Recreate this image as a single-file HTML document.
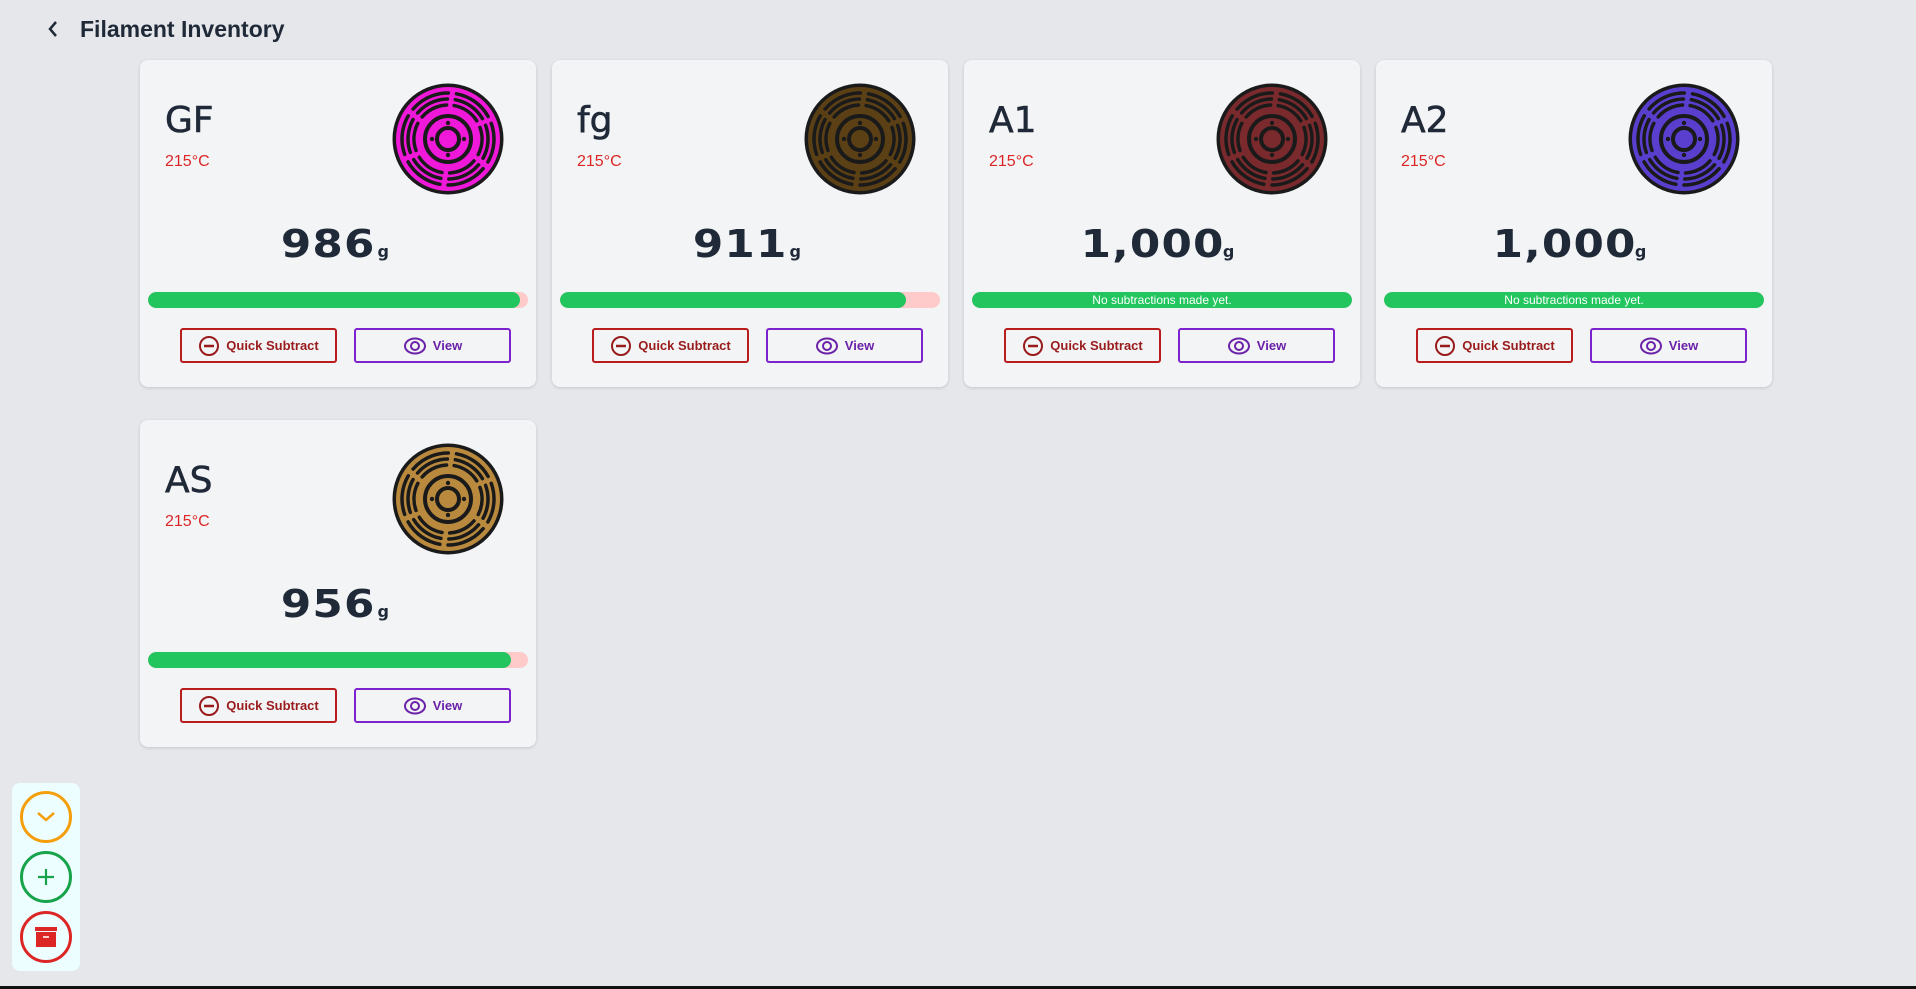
<!DOCTYPE html>
<html><head><meta charset="utf-8"><style>
*{box-sizing:border-box;margin:0;padding:0}
body{width:1916px;height:989px;background:#e5e7eb;font-family:"Liberation Sans",sans-serif;position:relative;overflow:hidden}
.hdr{position:absolute;left:46px;top:14px;height:30px;display:flex;align-items:center;color:#1f2937}
.hdr span{font-size:23px;font-weight:600;margin-left:20px}
.card{position:absolute;width:396px;height:327px;background:#f3f4f6;border-radius:8px;box-shadow:0 1px 3px rgba(0,0,0,.15)}
.t{position:absolute;left:25px;top:40px;font-size:36px;color:#1f2937;font-family:"DejaVu Sans",sans-serif;-webkit-text-stroke:0.6px #1f2937}
.tmp{position:absolute;left:25px;top:93px;font-size:16px;color:#dc2626}
.sp{position:absolute;left:252px;top:23px}
.w{position:absolute;left:0;right:0;top:162px;text-align:center;color:#1f2937;font-family:"DejaVu Sans",sans-serif;font-weight:bold}
.w b{font-size:38px;letter-spacing:1px;display:inline-block;transform:scaleX(1.15)}
.w i{font-style:normal;font-size:16px;margin-left:8px}
.bar{position:absolute;left:8px;top:232px;width:380px;height:16px;border-radius:8px;background:#fecaca;overflow:hidden}
.bar div{height:100%;background:#22c55e;border-radius:8px;color:#fff;font-size:12px;text-align:center;line-height:16px}
.btn{position:absolute;top:268px;width:157px;height:35px;border:2px solid;border-radius:3px;display:flex;align-items:center;justify-content:center;font-size:13px;font-weight:bold}
.qs{left:40px;border-color:#b91c1c;color:#991b1b}
.vw{left:214px;border-color:#7e22ce;color:#6b21a8}
.btn svg{margin-right:6px}
.fab{position:absolute;left:12px;top:783px;width:68px;height:188px;background:#ecfeff;border-radius:8px}
.c{position:absolute;left:8px;width:52px;height:52px;border-radius:50%;border:3px solid;display:flex;align-items:center;justify-content:center}
.line{position:absolute;left:0;bottom:0;width:1916px;height:3px;background:#111}
</style></head><body>
<div class="hdr"><svg width="14" height="20" viewBox="0 0 14 20"><path d="M10 3 L4 10 L10 17" fill="none" stroke="#1f2937" stroke-width="2.5"/></svg><span>Filament Inventory</span></div>

<svg width="0" height="0" style="position:absolute"><defs>
<g id="pat">
<circle cx="56" cy="56" r="55.5" fill="#1a1a1a"/>
<circle cx="56" cy="56" r="52" fill="currentColor"/>
<g fill="none" stroke="#1a1a1a" stroke-width="3.5" stroke-linecap="round">
<circle cx="56" cy="56" r="46" stroke-dasharray="40 8.2" transform="rotate(-20 56 56)"/>
<circle cx="56" cy="56" r="40" stroke-dasharray="34 7.9" transform="rotate(-20 56 56)"/>
<circle cx="56" cy="56" r="34" stroke-dasharray="28 7.6" transform="rotate(-20 56 56)"/>
<circle cx="56" cy="56" r="23" stroke-width="4"/>
<circle cx="56" cy="56" r="11" stroke-width="4"/>
</g>
<g fill="#1a1a1a"><circle cx="56" cy="40" r="2.2"/><circle cx="56" cy="72" r="2.2"/><circle cx="40" cy="56" r="2.2"/><circle cx="72" cy="56" r="2.2"/></g>
</g></defs></svg>

<div class="card" style="left:140px;top:60px">
<div class="t">GF</div><div class="tmp">215°C</div>
<svg class="sp" width="112" height="112" style="color:#f019d9"><use href="#pat"/></svg>
<div class="w"><b>986</b><i>g</i></div>
<div class="bar"><div style="width:98%"></div></div>
<div class="btn qs"><svg width="22" height="22" viewBox="0 0 22 22"><circle cx="11" cy="11" r="9" fill="none" stroke="#991b1b" stroke-width="2"/><path d="M6 11h10" stroke="#991b1b" stroke-width="2.5"/></svg>Quick Subtract</div>
<div class="btn vw"><svg width="24" height="18" viewBox="0 0 24 18"><ellipse cx="12" cy="9" rx="10" ry="7.5" fill="none" stroke="#6b21a8" stroke-width="2"/><circle cx="12" cy="9" r="4" fill="none" stroke="#6b21a8" stroke-width="2"/></svg>View</div>
</div>

<div class="card" style="left:552px;top:60px">
<div class="t">fg</div><div class="tmp">215°C</div>
<svg class="sp" width="112" height="112" style="color:#5c4015"><use href="#pat"/></svg>
<div class="w"><b>911</b><i>g</i></div>
<div class="bar"><div style="width:91%"></div></div>
<div class="btn qs"><svg width="22" height="22" viewBox="0 0 22 22"><circle cx="11" cy="11" r="9" fill="none" stroke="#991b1b" stroke-width="2"/><path d="M6 11h10" stroke="#991b1b" stroke-width="2.5"/></svg>Quick Subtract</div>
<div class="btn vw"><svg width="24" height="18" viewBox="0 0 24 18"><ellipse cx="12" cy="9" rx="10" ry="7.5" fill="none" stroke="#6b21a8" stroke-width="2"/><circle cx="12" cy="9" r="4" fill="none" stroke="#6b21a8" stroke-width="2"/></svg>View</div>
</div>

<div class="card" style="left:964px;top:60px">
<div class="t">A1</div><div class="tmp">215°C</div>
<svg class="sp" width="112" height="112" style="color:#7a2a2c"><use href="#pat"/></svg>
<div class="w"><b>1,000</b><i>g</i></div>
<div class="bar"><div style="width:100%">No subtractions made yet.</div></div>
<div class="btn qs"><svg width="22" height="22" viewBox="0 0 22 22"><circle cx="11" cy="11" r="9" fill="none" stroke="#991b1b" stroke-width="2"/><path d="M6 11h10" stroke="#991b1b" stroke-width="2.5"/></svg>Quick Subtract</div>
<div class="btn vw"><svg width="24" height="18" viewBox="0 0 24 18"><ellipse cx="12" cy="9" rx="10" ry="7.5" fill="none" stroke="#6b21a8" stroke-width="2"/><circle cx="12" cy="9" r="4" fill="none" stroke="#6b21a8" stroke-width="2"/></svg>View</div>
</div>

<div class="card" style="left:1376px;top:60px">
<div class="t">A2</div><div class="tmp">215°C</div>
<svg class="sp" width="112" height="112" style="color:#5a3fcf"><use href="#pat"/></svg>
<div class="w"><b>1,000</b><i>g</i></div>
<div class="bar"><div style="width:100%">No subtractions made yet.</div></div>
<div class="btn qs"><svg width="22" height="22" viewBox="0 0 22 22"><circle cx="11" cy="11" r="9" fill="none" stroke="#991b1b" stroke-width="2"/><path d="M6 11h10" stroke="#991b1b" stroke-width="2.5"/></svg>Quick Subtract</div>
<div class="btn vw"><svg width="24" height="18" viewBox="0 0 24 18"><ellipse cx="12" cy="9" rx="10" ry="7.5" fill="none" stroke="#6b21a8" stroke-width="2"/><circle cx="12" cy="9" r="4" fill="none" stroke="#6b21a8" stroke-width="2"/></svg>View</div>
</div>

<div class="card" style="left:140px;top:420px">
<div class="t">AS</div><div class="tmp">215°C</div>
<svg class="sp" width="112" height="112" style="color:#b98a3e"><use href="#pat"/></svg>
<div class="w"><b>956</b><i>g</i></div>
<div class="bar"><div style="width:95.6%"></div></div>
<div class="btn qs"><svg width="22" height="22" viewBox="0 0 22 22"><circle cx="11" cy="11" r="9" fill="none" stroke="#991b1b" stroke-width="2"/><path d="M6 11h10" stroke="#991b1b" stroke-width="2.5"/></svg>Quick Subtract</div>
<div class="btn vw"><svg width="24" height="18" viewBox="0 0 24 18"><ellipse cx="12" cy="9" rx="10" ry="7.5" fill="none" stroke="#6b21a8" stroke-width="2"/><circle cx="12" cy="9" r="4" fill="none" stroke="#6b21a8" stroke-width="2"/></svg>View</div>
</div>

<div class="fab">
<div class="c" style="top:8px;border-color:#f59e0b"><svg width="20" height="12" viewBox="0 0 20 12"><path d="M2 2 L10 9 L18 2" fill="none" stroke="#f59e0b" stroke-width="2.5"/></svg></div>
<div class="c" style="top:68px;border-color:#16a34a"><svg width="18" height="18" viewBox="0 0 18 18"><path d="M9 1v16M1 9h16" stroke="#16a34a" stroke-width="2.2"/></svg></div>
<div class="c" style="top:128px;border-color:#dc2626"><svg width="24" height="22" viewBox="0 0 24 22"><rect x="1" y="1" width="22" height="4" fill="#dc2626"/><rect x="2" y="6" width="20" height="15" fill="#dc2626"/><rect x="9" y="10" width="6" height="2" fill="#fecaca"/></svg></div>
</div>
<div class="line"></div>
</body></html>
